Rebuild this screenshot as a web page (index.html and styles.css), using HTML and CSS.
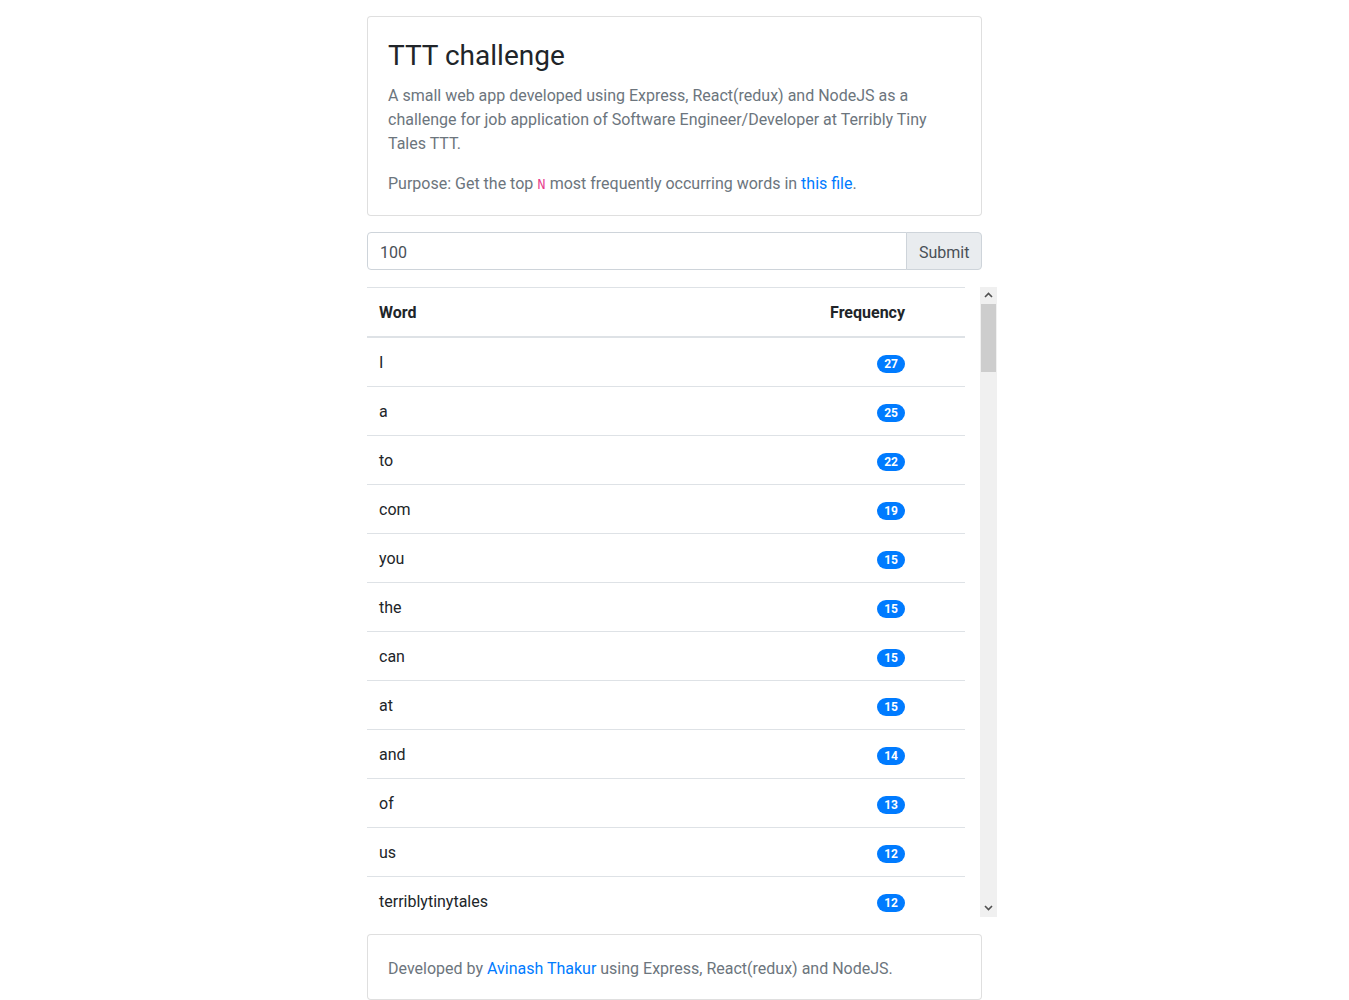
FILE: index.html
```html
<!DOCTYPE html>
<html lang="en">
<head>
<meta charset="utf-8">
<title>TTT challenge</title>
<link rel="stylesheet" href="styles.css">
</head>
<body>
<div class="container">
  <div class="card">
    <div class="card-body intro">
      <h3 class="card-title">TTT challenge</h3>
      <p class="card-text muted">A small web app developed using Express, React(redux) and NodeJS as a challenge for job application of Software Engineer/Developer at Terribly Tiny Tales TTT.</p>
      <p class="card-text muted">Purpose: Get the top <code>N</code> most frequently occurring words in <a href="#">this file</a>.</p>
    </div>
  </div>

  <form class="input-group">
    <input class="form-control" type="text" value="100">
    <button class="btn" type="button">Submit</button>
  </form>

  <div class="scroll-area">
    <div class="scroll-view">
      <table class="table">
        <thead>
          <tr><th>Word</th><th class="freq">Frequency</th></tr>
        </thead>
        <tbody>
          <tr><td>I</td><td class="freq"><span class="badge">27</span></td></tr>
          <tr><td>a</td><td class="freq"><span class="badge">25</span></td></tr>
          <tr><td>to</td><td class="freq"><span class="badge">22</span></td></tr>
          <tr><td>com</td><td class="freq"><span class="badge">19</span></td></tr>
          <tr><td>you</td><td class="freq"><span class="badge">15</span></td></tr>
          <tr><td>the</td><td class="freq"><span class="badge">15</span></td></tr>
          <tr><td>can</td><td class="freq"><span class="badge">15</span></td></tr>
          <tr><td>at</td><td class="freq"><span class="badge">15</span></td></tr>
          <tr><td>and</td><td class="freq"><span class="badge">14</span></td></tr>
          <tr><td>of</td><td class="freq"><span class="badge">13</span></td></tr>
          <tr><td>us</td><td class="freq"><span class="badge">12</span></td></tr>
          <tr><td>terriblytinytales</td><td class="freq"><span class="badge">12</span></td></tr>
        </tbody>
      </table>
    </div>
    <div class="scrollbar" aria-hidden="true">
      <div class="sb-btn">
        <svg width="9" height="6" viewBox="0 0 9 6"><path d="M1 5 L4.5 1.5 L8 5" fill="none" stroke="#505050" stroke-width="1.6"/></svg>
      </div>
      <div class="sb-track">
        <div class="sb-thumb"></div>
      </div>
      <div class="sb-btn">
        <svg width="9" height="6" viewBox="0 0 9 6"><path d="M1 1 L4.5 4.5 L8 1" fill="none" stroke="#505050" stroke-width="1.6"/></svg>
      </div>
    </div>
  </div>

  <div class="card footer-card">
    <div class="card-body footer-body">
      <p class="card-text muted">Developed by <a href="#">Avinash Thakur</a> using Express, React(redux) and NodeJS.</p>
    </div>
  </div>
</div>
</body>
</html>
```

FILE: styles.css
```css
* { box-sizing: border-box; }

html, body {
  margin: 0;
  padding: 0;
}

body {
  font-family: "Segoe UI", Roboto, "Liberation Sans", sans-serif;
  font-size: 16px;
  line-height: 1.5;
  color: #212529;
  background: #fff;
}

.container {
  width: 615px;
  margin: 16px auto 0;
}

.card {
  border: 1px solid rgba(0, 0, 0, 0.125);
  border-radius: 4px;
  background: #fff;
}

.card-body {
  padding: 20px;
}

.intro {
  padding-bottom: 19px;
}

.footer-body {
  padding: 22px 20px 18px;
}

.card-title {
  margin: 0 0 11px;
  padding-top: 2px;
  font-size: 28px;
  font-weight: 400;
  line-height: 1.2;
  color: #212529;
}

.card-text {
  margin: 0 0 16px;
}

.card-text:last-child {
  margin-bottom: 0;
}

.muted {
  color: #6c757d;
}

a {
  color: #007bff;
  text-decoration: none;
}

code {
  font-family: "Liberation Mono", "DejaVu Sans Mono", monospace;
  font-size: 14px;
  color: #e83e8c;
}

.input-group {
  display: flex;
  margin: 16px 0 0;
  height: 38px;
}

.form-control {
  flex: 1;
  min-width: 0;
  height: 38px;
  padding: 8px 12px 4px;
  font-family: inherit;
  font-size: 16px;
  line-height: 24px;
  color: #495057;
  border: 1px solid #ced4da;
  border-radius: 4px 0 0 4px;
  outline: none;
}

.btn {
  width: 76px;
  height: 38px;
  margin-left: -1px;
  padding: 8px 12px 4px;
  font-family: inherit;
  font-size: 16px;
  line-height: 24px;
  color: #495057;
  background: #e9ecef;
  border: 1px solid #ced4da;
  border-radius: 0 4px 4px 0;
}

.scroll-area {
  display: flex;
  width: 630px;
  height: 630px;
  margin-top: 17px;
}

.scroll-view {
  flex: 1;
  overflow: hidden;
}

.table {
  width: 598px;
  border-collapse: collapse;
  color: #212529;
}

.table th,
.table td {
  padding: 13px 12px 11px;
  border-top: 1px solid #dee2e6;
  text-align: left;
  vertical-align: top;
  line-height: 24px;
}

.table thead th {
  font-weight: 700;
  border-bottom: 2px solid #dee2e6;
}

.table .freq {
  text-align: right;
  padding-right: 60px;
}

.badge {
  display: inline-block;
  padding: 3px 7px;
  font-size: 12px;
  font-weight: 700;
  line-height: 1;
  color: #fff;
  background: #007bff;
  border-radius: 10rem;
  vertical-align: baseline;
}

.scrollbar {
  width: 17px;
  display: flex;
  flex-direction: column;
  background: #f0f0f0;
}

.sb-btn {
  height: 17px;
  display: flex;
  align-items: center;
  justify-content: center;
}

.sb-track {
  flex: 1;
}

.sb-thumb {
  height: 68px;
  margin: 0 1px;
  background: #cdcdcd;
}

.footer-card {
  margin-top: 17px;
}
```
